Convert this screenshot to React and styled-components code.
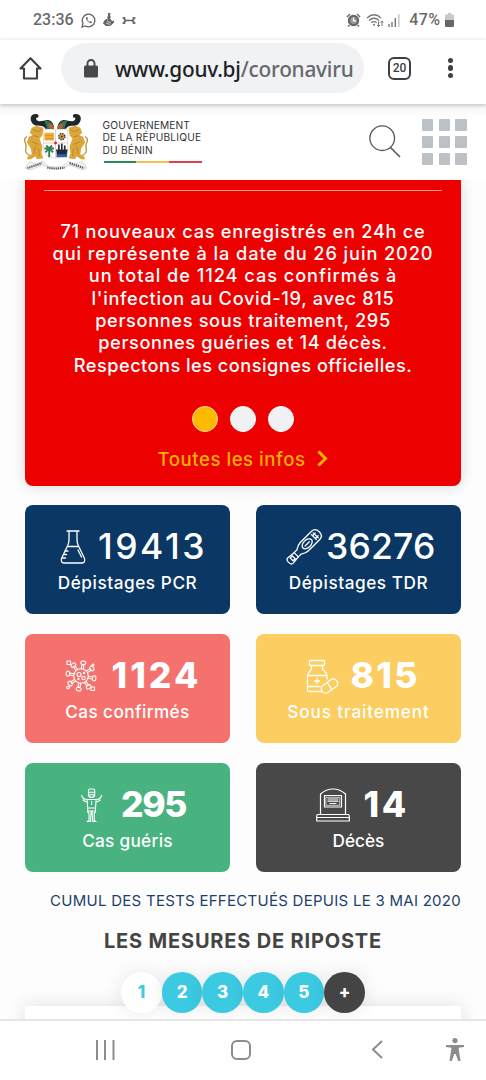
import React from "react";
import styled, { createGlobalStyle } from "styled-components";

const Global = createGlobalStyle`
  * { box-sizing: border-box; }
  body { margin: 0; background: #fdfdfd; font-family: Inter, "Liberation Sans", sans-serif; }
  svg { display: block; flex: none; }
`;

const Screen = styled.div`
  width: 486px; height: 1080px; overflow: hidden;
  display: flex; flex-direction: column; background: #fdfdfd;
`;

const StatusBar = styled.div`
  height: 40px; flex: none; padding: 0 32px 0 33px; background: #fff;
  display: flex; align-items: center; justify-content: space-between;
  font: 500 16px/40px Roboto, sans-serif; color: #6a6a6a;
`;
const StatusGroup = styled.div`
  display: flex; align-items: center; gap: ${(p) => p.$gap}px;
`;
const StatusText = styled.span`letter-spacing: ${(p) => p.$ls || 0}px; white-space: nowrap;`;

const Toolbar = styled.div`
  height: 64px; flex: none; padding: 0 24px 8px 18px; background: #fff;
  display: flex; align-items: center; position: relative; z-index: 2;
  box-shadow: 0 1px 4px rgba(0,0,0,.24);
`;
const UrlPill = styled.div`
  width: 303px; height: 50px; margin-left: 18px; border-radius: 25px; background: #f1f2f4;
  display: flex; align-items: center; padding-left: 23px; gap: 17px;
`;
const Url = styled.div`
  font: 500 20.8px/30px "Noto Sans", sans-serif; letter-spacing: ${(p) => p.$ls}px;
  color: #65686b; white-space: nowrap; padding-top: 1px;
  b { font-weight: 500; color: #202124; }
`;
const TabCount = styled.div`
  width: 23px; height: 23px; margin-left: 24px; border: 2.5px solid #3f4043; border-radius: 6px;
  font: 500 12px/18px Roboto, sans-serif; text-align: center; color: #3f4043;
`;
const MoreDots = styled.div`
  margin-left: auto; margin-right: 9px; display: flex; flex-direction: column; gap: 2.6px;
  i { width: 5.2px; height: 5.2px; border-radius: 50%; background: #3f4043; }
`;

const SiteHeader = styled.header`
  height: 76px; flex: none; padding: 0 19px 0 24px; display: flex; align-items: center;
  background: linear-gradient(#f4f4f4, #fff 14px);
`;
const Brand = styled.div`margin-left: 14.5px; width: 100px; padding-bottom: 2px;`;
const BrandLine = styled.div`
  font-size: 10.2px; line-height: 12.3px; color: #333; white-space: nowrap;
  letter-spacing: ${(p) => p.$ls}px;
`;
const Flag = styled.div`
  height: 2px; margin: 5px 0 0 1px; width: 98px;
  background: linear-gradient(90deg, #2a8a57 33%, #f2c14b 33% 66%, #e0404a 66%);
`;
const SearchSlot = styled.div`margin-left: auto; padding-bottom: 1px;`;
const AppGrid = styled.div`
  margin-left: 20.5px; display: grid; grid-template-columns: repeat(3, 11.7px); gap: 5.1px;
  i { height: 11.7px; background: #bcc1c5; border-radius: 1px; }
`;

const Main = styled.main`flex: 1; min-height: 0; overflow: hidden; padding: 0 25px;`;
const Alert = styled.section`
  height: 305.6px; background: #ec0000; border-radius: 0 0 8px 8px; padding: 10px 19px 0;
  box-shadow: 0 0 14px rgba(0,0,0,.16); text-align: center; color: #fff;
`;
const Rule = styled.div`height: 1px; background: #ff9d95;`;
const Message = styled.div`padding-top: 28.5px;`;
const MessageLine = styled.div`
  font-size: 18.2px; font-weight: 500; line-height: 22.35px; white-space: nowrap;
  letter-spacing: ${(p) => p.$ls}px;
`;
const Dots = styled.div`
  display: flex; justify-content: center; gap: 12px; margin-top: 29.8px; margin-bottom: 15px;
`;
const Dot = styled.i`
  width: 26px; height: 26px; border-radius: 50%;
  border: 1.5px solid ${(p) => (p.$on ? "#ffdf9a" : "#fff")};
  background: ${(p) => (p.$on ? "#fdb900" : "#f0f1f3")};
`;
const MoreLink = styled.div`
  display: flex; justify-content: center; align-items: center; gap: 12px;
  color: #ffb000; font-size: 18.6px; font-weight: 500; line-height: 24px;
  letter-spacing: ${(p) => p.$ls}px;
`;

const Stats = styled.section`
  margin-top: 19px; display: grid; grid-template-columns: 205px 205px; column-gap: 26px; row-gap: 19.3px;
`;
const Card = styled.div`
  height: 109.7px; border-radius: 8px; background: ${(p) => p.$bg}; color: #fff;
`;
const Figure = styled.div`
  height: 34px; margin-top: 25.2px; padding-left: ${(p) => p.$start}px; gap: ${(p) => p.$gap}px;
  display: flex; align-items: center;
`;
const Count = styled.div`
  font-size: 35.5px; line-height: 34px; font-weight: ${(p) => p.$weight};
  letter-spacing: ${(p) => p.$ls}px; white-space: nowrap;
`;
const Label = styled.div`
  margin-top: 8px; text-align: center; font-size: 17.2px; line-height: 22px; font-weight: 500;
  letter-spacing: ${(p) => p.$ls}px;
`;

const Note = styled.div`
  margin-top: 17.7px; text-align: right; white-space: nowrap;
  font-size: 15px; line-height: 22px; color: #1d3f6b; letter-spacing: ${(p) => p.$ls}px;
`;
const Title = styled.h2`
  margin: 17px 0 0; text-align: center; font-size: 20px; line-height: 24px; font-weight: 700;
  color: #444; letter-spacing: ${(p) => p.$ls}px; white-space: nowrap;
`;
const Steps = styled.div`
  display: flex; justify-content: center; margin-top: 19.2px; position: relative; z-index: 1;
`;
const Step = styled.div`
  width: 40.6px; height: 40.6px; border-radius: 50%; text-align: center;
  font-size: 17px; line-height: 41px; font-weight: 800;
  color: ${(p) => p.$fg || "#fff"}; background: ${(p) => p.$bg || "#3bcae2"};
  box-shadow: 0 0 20px rgba(0,0,0,.09);
`;
const Panel = styled.div`
  height: 60px; margin-top: -7px; background: #fff; box-shadow: 0 0 18px rgba(0,0,0,.12);
`;

const NavBar = styled.nav`
  height: 61px; flex: none; border-top: 2px solid #e6e6e6; background: #fefefe;
  display: flex; align-items: center; padding: 0 22px 2px 95px; position: relative; z-index: 3;
`;
const NavItem = styled.div`margin-right: ${(p) => p.$after || 0}px;`;

const line = { fill: "none", stroke: "currentColor", strokeWidth: 1.3, strokeLinecap: "round", strokeLinejoin: "round" };

const Lion = () => (
  <g>
    <path d="M8 14 L13 12 L20 14 L19 22 L16 25 L19 33 L18 40 L20 45 L13 46 L12 43 L7 46 L3 46 L4 43 L8 41 L7 35 L3 29 L5 23 L9 22 L6 19Z" fill="#dda63a" />
    <path d="M9 16l5 2 4-2M9 22l6 1M8 28l7 3M12 33l-2 8M15 35l1 8" fill="none" stroke="#b98530" strokeWidth=".9" />
    <path d="M6 42C-1 40 3 34 2 31S-1 25 3 23" fill="none" stroke="#c08a2b" strokeWidth="1.3" />
  </g>
);
const Horn = () => (
  <g>
    <path d="M9 10C5 5 7 0 12 0c3 0 4 2 2 4-1-1-2 0-1 2 3 3 7 0 12 0 4 1 6 4 6 9l-9 0c-2-5-9-1-13-5Z" fill="#20262a" />
    <path d="M21 7c5-1 9 2 10 8l-7 0Z" fill="#31764a" />
    <path d="M25 10l5 1 1 4h-5Z" fill="#b4603a" />
  </g>
);
const CoatOfArms = () => (
  <svg width="64" height="57" viewBox="0 0 66 58" preserveAspectRatio="none">
    <Lion />
    <g transform="translate(66 0) scale(-1 1)"><Lion /></g>
    <path d="M20 16h25v23q-3 4-12.500 6Q22 43 20 39Z" fill="#fff" stroke="#d8d0c0" strokeWidth=".7" />
    <rect x="21" y="19" width="10" height="8" fill="#f0b13a" />
    <path d="M22 22h8M22 25h8" stroke="#c9852a" strokeWidth=".8" />
    <circle cx="39" cy="23" r="3.200" fill="#c9a04a" stroke="#444" strokeWidth="1.500" strokeDasharray="1.500 1" />
    <circle cx="39" cy="23" r="1" fill="#333" />
    <path d="M26 44v-10M26 35l-5 0M26 35l-4 4M26 35l5 0M26 35l4 4M26 35l-3-3M26 35l3-3" stroke="#2e8150" strokeWidth="2" />
    <rect x="33.500" y="38.500" width="11" height="5.500" fill="#2e5fa8" />
    <path d="M34 37h10l-1 3h-8ZM36 31v6M39 30v7M42 32v5" fill="#222c38" stroke="#222c38" strokeWidth="1.700" />
    <path d="M32.500 16v28M20 29.500h25" stroke="#e5b5b0" strokeWidth=".7" />
    <path d="M31 29.500h3M32.500 28v3" stroke="#d7263d" strokeWidth="1.600" />
    <Horn />
    <g transform="translate(65.500 0) scale(-1 1)"><Horn /></g>
    <path d="M1 55l5-7c4 3 9 3 13 0l6 5c5 1 10 1 15 0l6-5c4 3 10 3 14 0l5 7-4 2c-6-1-9-4-14-5-8 5-19 5-27 0-5 1-9 4-15 5Z" fill="#f1f1ef" stroke="#c4c4c4" strokeWidth=".6" />
    <path d="M3.500 55q6-2 15-5M24 54.500q8 2 18 0M47 50q9 3 15 5" fill="none" stroke="#555" strokeWidth="2.200" strokeDasharray="1.300 .9" />
  </svg>
);

const icons = {
  flask: (
    <g {...line}>
      <path d="M11 1h12M13 1v9q0 3-1.500 6L5.500 28.500Q4.500 33 8 33h18q3.500 0 2.500-4.500L22.500 16Q21 13 21 10V1" />
      <path d="M12 16.500h10M9 21h3M7.500 24.500h3M6.500 28h3M22 20l3.500 7" />
    </g>
  ),
  thermometer: (
    <g {...line} transform="rotate(45 17 17)">
      <path d="M17-4.500q5.800 0 5.800 5v16q0 3.500-2.800 7.500v4h-6v-4q-2.800-4-2.800-7.500V.5q0-5 5.800-5Z" />
      <path d="M14 28l-.800 8q0 2.800 3.800 2.800t3.800-2.800l-.800-8M15 31.500h4v3h-4ZM13.500.5h7M13.500 3h7M15-1v4M19-1v4" />
      <ellipse cx="17" cy="12.500" rx="3.800" ry="6" /><path d="M17 9.500v6" />
    </g>
  ),
  virus: (
    <g {...line} strokeWidth="1.100">
      <circle cx="17" cy="17" r="7.300" /><circle cx="15" cy="15.500" r="2" /><circle cx="19.500" cy="19" r="1.700" /><circle cx="20" cy="14" r=".6" /><circle cx="14.500" cy="20" r=".6" />
      {[10, 55, 100, 145, 190, 235, 280, 325].map((a) => (
        <g key={a} transform={`rotate(${a} 17 17)`}>
          <path d="M16 9.700V5.500M18 9.700V5.500" /><rect x="14.500" y="2" width="5" height="3.300" rx="1.500" />
        </g>
      ))}
      <rect x="3" y="2" width="3.500" height="3.500" /><rect x="27" y="28" width="3.500" height="3.500" /><circle cx="4" cy="28.500" r="1.300" /><circle cx="29" cy="6" r="1" />
    </g>
  ),
  pills: (
    <g {...line}>
      <rect x="4.500" y="1.500" width="15" height="5" rx="1" />
      <path d="M6.500 6.500V10L3.500 14Q2.500 15.500 2.500 17v14q0 1.500 1.500 1.500h13M17.500 6.500V10l3.500 4q1 1.500 1 3v3M2.500 16.500H22M2.500 27.500H15M12 19.500v5M9.500 22h5" />
      <g transform="rotate(-35 24.500 27)"><rect x="15.500" y="22.700" width="18" height="8.600" rx="4.300" /><path d="M24.500 22.700v8.600" /></g>
    </g>
  ),
  person: (
    <g {...line} strokeWidth="1.100">
      <path d="M13.500 4.500V2.500Q13.500 1 15 1h3.200q1.500 0 1.500 1.500V7q0 2.300-3.100 2.300T13.500 7ZM13.500 4.200h6.200M14 6.800h5.300" />
      <path d="M6.700 7.300q.6 3.700 5 4.200h9.800q4.400-.5 5-4.200M8 12q1.500 1.500 4 2M25.200 12q-1.500 1.500-4 2" />
      <path d="M12 11.500l.7 8.500h7.800l.7-8.500M16.600 13.500v3M12.700 20v4l1.300 1v7.500l-1.800 1h3.300l.6-9.500h1l.6 9.500H21l-1.800-1V25l1.300-1v-4M13 23h7" />
    </g>
  ),
  grave: (
    <g {...line} strokeWidth="1.200">
      <path d="M4.500 26.500V6Q10 1 17 1T29.500 6v20.500M2 26.500h30q1.300 0 1.300 1.500v5H.7v-5q0-1.500 1.300-1.500ZM1 29.500h32" />
      <rect x="8.500" y="7.500" width="17" height="11.500" /><rect x="10.300" y="9.300" width="13.400" height="8" strokeWidth=".7" /><path d="M12 11h10M12 13.200h10M14 15.500h6" />
    </g>
  ),
};
const StatIcon = ({ name }) => <svg width="34" height="34" viewBox="0 0 34 34" overflow="visible">{icons[name]}</svg>;

const stats = [
  { bg: "#0b3764", icon: "flask", start: 31, gap: 8, n: "19413", w: 500, ls: 2.5, label: "Dépistages PCR", lls: 0.55 },
  { bg: "#0b3764", icon: "thermometer", start: 31, gap: 5, n: "36276", w: 500, ls: 0.2, label: "Dépistages TDR", lls: 0.55 },
  { bg: "#f4716d", icon: "virus", start: 39, gap: 13.5, n: "1124", w: 800, ls: 3, label: "Cas confirmés", lls: 0.4 },
  { bg: "#fccd60", icon: "pills", start: 49, gap: 11.5, n: "815", w: 800, ls: 2.3, label: "Sous traitement", lls: 0.85 },
  { bg: "#48b380", icon: "person", start: 50, gap: 12, n: "295", w: 800, ls: -1.4, label: "Cas guéris", lls: 0.3 },
  { bg: "#484848", icon: "grave", start: 60, gap: 13.5, n: "14", w: 800, ls: 2.5, label: "Décès", lls: 0 },
];

const message = [
  ["71 nouveaux cas enregistrés en 24h ce", 0.74],
  ["qui représente à la date du 26 juin 2020", 0.9],
  ["un total de 1124 cas confirmés à", 0.95],
  ["l'infection au Covid-19, avec 815", 0.67],
  ["personnes sous traitement, 295", 0.65],
  ["personnes guéries et 14 décès.", 0.6],
  ["Respectons les consignes officielles.", 0.47],
];

export default function App() {
  return (
    <Screen>
      <Global />
      <StatusBar>
        <StatusGroup $gap={7}>
          <StatusText>23:36</StatusText>
          <svg width="15" height="15" viewBox="0 0 15 15" fill="none" stroke="#666" strokeWidth="1.300">
            <path d="M1 14l1-3.500A6.300 6.300 0 1 1 4.500 13Z" />
            <path d="M5 4.500q-.7 1.500 1.500 3.700T10.500 10.300l.5-1.300-1.800-1-1 .8Q6.800 8 6.200 6.600L7 5.700 6.200 4Z" fill="#666" stroke="none" />
          </svg>
          <svg width="12" height="14" viewBox="0 0 12 14" fill="#666">
            <path d="M5 0h2.500l-.5 3 1 1-1 1.500L9 8l2-.5v2L8.500 12 7 13H3L0 10.500 1 8l2-2 2 .5-1-2 1-1.500Z" />
            <path d="M4 8l4 2M3 10l4 1.500" stroke="#fff" strokeWidth=".7" />
          </svg>
          <svg width="14" height="9" viewBox="0 0 14 9" fill="none" stroke="#666" strokeWidth="1.700">
            <path d="M4 4.500h6M2.500 1v2.500L4 4.500 2.500 5.500V8M11.500 1v2.500L10 4.500l1.500 1V8M.5 2h2M11.500 2h2M.5 7h2M11.500 7h2" />
          </svg>
        </StatusGroup>
        <StatusGroup $gap={4.5}>
          <svg width="15" height="14" viewBox="0 0 15 14">
            <circle cx="7.500" cy="7.500" r="4.600" fill="#999" stroke="#666" strokeWidth="2.200" />
            <path d="M7.500 4.500v3.300h2.500" stroke="#fff" strokeWidth="1.200" fill="none" />
            <path d="M1 4l3-3M14 4l-3-3M3.500 12L2 13.500M11.500 12l1.500 1.500" stroke="#666" strokeWidth="1.400" fill="none" />
          </svg>
          <svg width="18" height="14" viewBox="0 0 18 14" fill="none" stroke="#777" strokeWidth="1.300">
            <path d="M1 5Q8-1.500 15 5M3 7.500q5-4.500 10 0M5.300 9.800q2.700-2.300 5.400 0" />
            <circle cx="8" cy="11.800" r="1" fill="#777" stroke="none" />
            <path d="M12.500 8.500v5M11 12l1.500 1.500L14 12M16 13V8M14.700 9.500L16 8l1.300 1.500" strokeWidth="1" />
          </svg>
          <svg width="12" height="13" viewBox="0 0 12 13" strokeWidth="1.400">
            <path d="M1 13v-3M4 13V8M7.300 13V4" stroke="#777" /><path d="M10.800 13V0" stroke="#c4c4c4" />
          </svg>
          <StatusText $ls={0.4}>&nbsp;47%</StatusText>
          <svg width="9" height="14" viewBox="0 0 9 14">
            <path d="M3 0h3v1.500h2Q9 1.500 9 2.500V7H0V2.500q0-1 1-1h2Z" fill="#c8c8c8" /><path d="M0 7h9v5.500Q9 14 8 14H1Q0 14 0 12.500Z" fill="#666" />
          </svg>
        </StatusGroup>
      </StatusBar>

      <Toolbar>
        <svg width="25" height="25" viewBox="0 0 25 25" fill="none" stroke="#3f4043" strokeWidth="2.100" strokeLinejoin="round">
          <path d="M12.500 2.200L2.500 12.500H6V22.500h13V12.500h3.500Z" />
        </svg>
        <UrlPill>
          <svg width="14" height="19" viewBox="0 0 14 19">
            <rect y="6.500" width="14" height="12" rx="1.500" fill="#46484b" />
            <path d="M3.500 7V4.500a3.500 3.500 0 0 1 7 0V7" fill="none" stroke="#46484b" strokeWidth="1.900" />
          </svg>
          <Url $ls={-0.22}><b>www.gouv.bj</b>/coronaviru</Url>
        </UrlPill>
        <TabCount>20</TabCount>
        <MoreDots><i /><i /><i /></MoreDots>
      </Toolbar>

      <SiteHeader>
        <CoatOfArms />
        <Brand>
          <BrandLine $ls={0.12}>GOUVERNEMENT</BrandLine>
          <BrandLine $ls={0.22}>DE LA RÉPUBLIQUE</BrandLine>
          <BrandLine $ls={0.22}>DU BÉNIN</BrandLine>
          <Flag />
        </Brand>
        <SearchSlot>
          <svg width="32" height="33" viewBox="0 0 32 33" fill="none" stroke="#555" strokeWidth="1.300">
            <circle cx="13.200" cy="13.200" r="12.300" /><path d="M21.500 22.500l9.500 9.500" strokeWidth="1.600" />
          </svg>
        </SearchSlot>
        <AppGrid>{Array.from({ length: 9 }, (_, i) => <i key={i} />)}</AppGrid>
      </SiteHeader>

      <Main>
        <Alert>
          <Rule />
          <Message>
            {message.map(([text, ls]) => <MessageLine key={text} $ls={ls}>{text}</MessageLine>)}
          </Message>
          <Dots><Dot $on /><Dot /><Dot /></Dots>
          <MoreLink $ls={0.53}>
            <span>Toutes les infos</span>
            <svg width="11" height="17" viewBox="0 0 11 17" fill="none" stroke="#ffb000" strokeWidth="3">
              <path d="M1.500 1.500l7 7-7 7" />
            </svg>
          </MoreLink>
        </Alert>

        <Stats>
          {stats.map((s) => (
            <Card key={s.label} $bg={s.bg}>
              <Figure $start={s.start} $gap={s.gap}>
                <StatIcon name={s.icon} />
                <Count $weight={s.w} $ls={s.ls}>{s.n}</Count>
              </Figure>
              <Label $ls={s.lls}>{s.label}</Label>
            </Card>
          ))}
        </Stats>

        <Note $ls={0.27}>CUMUL DES TESTS EFFECTUÉS DEPUIS LE 3 MAI 2020</Note>
        <Title $ls={0.82}>LES MESURES DE RIPOSTE</Title>
        <Steps>
          <Step $bg="#fff" $fg="#3bcae2">1</Step>
          <Step>2</Step><Step>3</Step><Step>4</Step><Step>5</Step>
          <Step $bg="#444">+</Step>
        </Steps>
        <Panel />
      </Main>

      <NavBar>
        <NavItem $after={116}>
          <svg width="20" height="20" viewBox="0 0 20 20" stroke="#8c8c8c" strokeWidth="2"><path d="M2 0v20M10 0v20M18.500 0v20" /></svg>
        </NavItem>
        <NavItem $after={120}>
          <svg width="20" height="20" viewBox="0 0 20 20"><rect x="1" y="1" width="18" height="18" rx="5" fill="none" stroke="#8c8c8c" strokeWidth="2" /></svg>
        </NavItem>
        <NavItem $after={63}>
          <svg width="12" height="19" viewBox="0 0 12 19" fill="none" stroke="#8c8c8c" strokeWidth="2"><path d="M11 1L2 9.500 11 18" /></svg>
        </NavItem>
        <NavItem>
          <svg width="18" height="23" viewBox="0 0 18 23" fill="#8c8c8c">
            <circle cx="9" cy="2.600" r="2.600" />
            <path d="M0 7h18v2l-5.500.8.800 5.200 1.200 8-2.300 0-2.500-7h-1.400l-2.500 7-2.300 0 1.200-8 .8-5.200L0 9Z" />
          </svg>
        </NavItem>
      </NavBar>
    </Screen>
  );
}
